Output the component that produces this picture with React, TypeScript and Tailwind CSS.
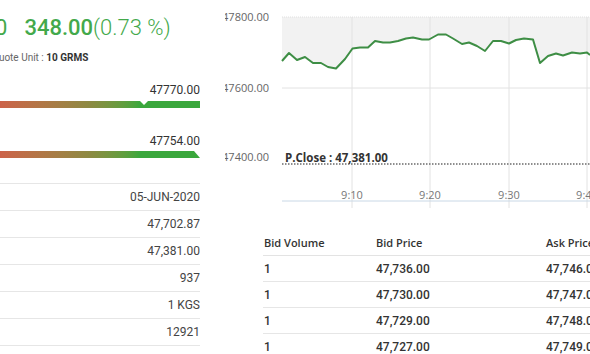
import React from "react";

// intraday points, page coordinates of the chart
const LINE: [number, number][] = [
  [282, 61], [289, 53], [297, 60], [305, 57], [313, 63], [321, 63],
  [328, 67], [336, 68.5], [345, 59], [352.5, 48.5], [360, 47.5], [368, 47.5],
  [375, 41], [383, 42.5], [390, 42.5], [398, 41], [406, 38.5], [413, 37.5],
  [422, 39.5], [429, 39.5], [438, 34.5], [446, 34.5], [453, 38.5], [462, 44],
  [469, 42.5], [477, 46], [485, 51], [493, 41], [501, 41], [509, 43.5],
  [516, 40], [524, 38.5], [533, 39.5], [540, 63], [548, 56], [556, 53.5],
  [563, 55.5], [572, 52.5], [580, 53.5], [587, 52.5], [590, 55],
];

const STATS = ["05-JUN-2020", "47,702.87", "47,381.00", "937", "1 KGS", "12921", "494"];

const DEPTH = [
  ["1", "47,736.00", "47,746.00"],
  ["1", "47,730.00", "47,747.00"],
  ["1", "47,729.00", "47,748.00"],
  ["1", "47,727.00", "47,749.00"],
];

const GRADIENT =
  "bg-linear-to-r from-[#cc6249] via-[#8c8a42] via-45% to-[#3aa73c] to-70%";

function LeftPanel() {
  return (
    <div className="w-[200px] shrink-0 overflow-hidden">
      <div className="flex h-[44px] items-start pt-[17px] text-[22px] leading-[22px] text-[#43a94b] whitespace-nowrap">
        <span className="-ml-[5px]">0</span>
        <span className="ml-[17px] font-medium">348.00</span>
        <span className="font-light">(0.73 %)</span>
      </div>
      <div className="mt-[8px] -ml-[8px] h-[12px] text-[10px] leading-[12px] whitespace-nowrap">
        <span className="text-[#666]">Quote Unit : </span>
        <span className="font-bold text-[#333]">10 GRMS</span>
      </div>

      <div className="mt-[19px] text-right text-[12px] leading-[14px] text-[#333]">47770.00</div>
      <div className={`relative mt-[4px] h-[7px] w-full ${GRADIENT}`}>
        <div className="absolute left-[140px] top-0 h-0 w-0 border-x-[4px] border-t-[4px] border-x-transparent border-t-white" />
      </div>

      <div className="mt-[26px] text-right text-[12px] leading-[14px] text-[#333]">47754.00</div>
      <div
        className={`mt-[3px] h-[7px] w-full ${GRADIENT} [clip-path:polygon(0_0,97%_0,100%_100%,0_100%)]`}
      />

      <div className="mt-[25px]">
        {STATS.map((v) => (
          <div
            key={v}
            className="flex h-[27px] items-center justify-end border-t border-[#e6e6e6] text-[12px] text-[#444]"
          >
            {v}
          </div>
        ))}
      </div>
    </div>
  );
}

function Chart() {
  const pts = LINE.map(([x, y]) => `${x},${y}`).join(" ");
  const area = `${pts} 590,17 282,17`;
  const label = "fill-[#666] text-[11px] font-['Open_Sans',sans-serif]";
  return (
    <svg width="365" height="215" viewBox="225 0 365 215" className="block shrink-0">
      <polygon points={area} fill="#f2f2f2" />
      <line x1="282" y1="17" x2="590" y2="17" stroke="#e0e0e0" strokeDasharray="1 1" />
      <line x1="282" y1="88" x2="590" y2="88" stroke="#e2e2e2" />
      {[352, 430, 509, 587].map((x) => (
        <line key={x} x1={x} y1="17" x2={x} y2="208" stroke="#e2e2e2" />
      ))}
      <polyline points={pts} fill="none" stroke="#3e8e45" strokeWidth="2" strokeLinejoin="round" />
      <line x1="282" y1="201" x2="590" y2="201" stroke="#c9d8e6" />
      <line x1="282" y1="164" x2="590" y2="164" stroke="#6a6a6a" strokeWidth="1.5" strokeDasharray="1.5 1.5" />

      <text x="269" y="21" textAnchor="end" className={label}>47800.00</text>
      <text x="269" y="92" textAnchor="end" className={label}>47600.00</text>
      <text x="269" y="161" textAnchor="end" className={label}>47400.00</text>

      {[
        [352, "9:10"],
        [430, "9:20"],
        [509, "9:30"],
        [587, "9:40"],
      ].map(([x, t]) => (
        <text key={t} x={x} y="199" textAnchor="middle" className="fill-[#777] text-[11px] font-['Open_Sans',sans-serif]">
          {t}
        </text>
      ))}

      <text x="285" y="162" className="fill-[#333] text-[11.5px] font-bold font-['Open_Sans',sans-serif]">
        P.Close : 47,381.00
      </text>
    </svg>
  );
}

function RightPanel() {
  return (
    <div className="ml-[25px] flex min-w-0 flex-1 flex-col overflow-hidden">
      <Chart />
      <div className="ml-[38px] mt-[16px] w-[340px] shrink-0 text-[#333]">
        <div className="grid h-[25px] grid-cols-[112px_170px_1fr] items-center border-b border-[#e3e3e3] pl-[1px] font-['Open_Sans',sans-serif] text-[11px] font-semibold whitespace-nowrap">
          <span>Bid Volume</span>
          <span>Bid Price</span>
          <span>Ask Price</span>
        </div>
        {DEPTH.map((r, i) => (
          <div
            key={i}
            className="grid h-[26px] grid-cols-[112px_170px_1fr] items-center border-b border-[#e6e6e6] pl-[1px] text-[12px] font-medium whitespace-nowrap"
          >
            <span>{r[0]}</span>
            <span>{r[1]}</span>
            <span>{r[2]}</span>
          </div>
        ))}
      </div>
    </div>
  );
}

export default function App() {
  return (
    <div className="flex h-[354px] w-[590px] overflow-hidden bg-white font-['Roboto',sans-serif]">
      <LeftPanel />
      <RightPanel />
    </div>
  );
}
